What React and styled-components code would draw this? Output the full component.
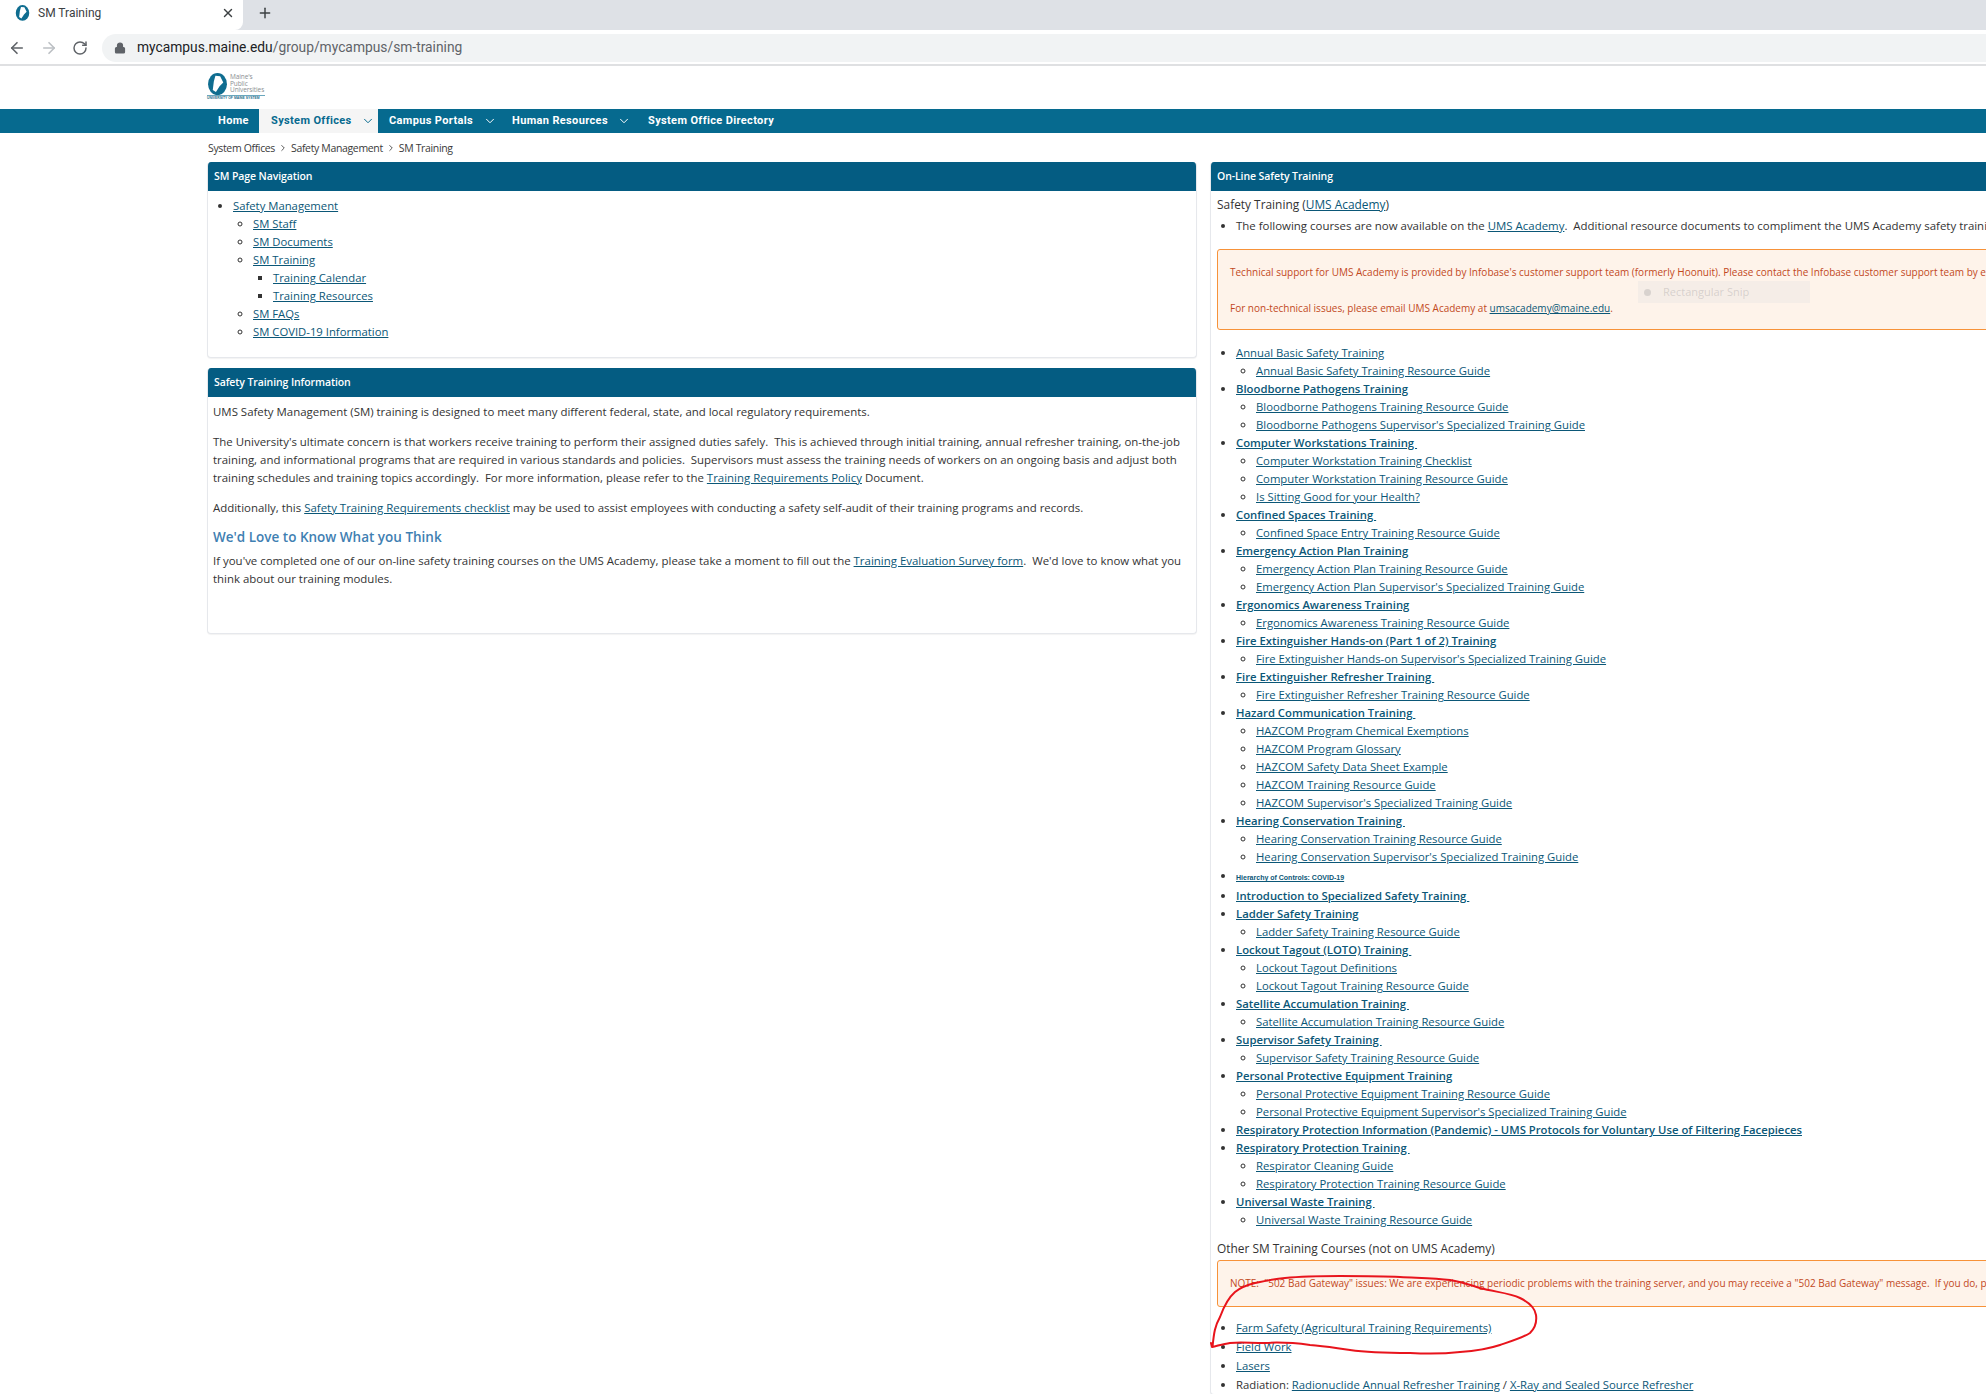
import React from "react";
import styled, { createGlobalStyle } from "styled-components";
import { ArrowLeft, ArrowRight, RotateCw, Lock, X, Plus, ChevronDown, ChevronRight } from "lucide-react";

const Global = createGlobalStyle`
  html, body { margin: 0; padding: 0; background: #fff; }
  body { font-family: "Open Sans", "Liberation Sans", sans-serif; font-size: 11.3px; line-height: 18px; color: #333; }
`;
const Page = styled.div`position: relative; width: 1986px; height: 1394px; overflow: hidden; background: #fff;`;
const TabStrip = styled.div`display: flex; align-items: stretch; height: 30px; background: #dee1e6;`;
const Tab = styled.div`
  width: 243px; box-sizing: border-box; display: flex; align-items: center; padding: 0 8px 4px 15px; background: #fff;
  border-radius: 0 0 8px 0; font: 12px/1 Roboto, sans-serif; color: #3c4043;
`;
const TabTitle = styled.span`margin-left: 8px; flex: 1;`;
const NewTab = styled.div`display: flex; align-items: center; margin-left: 14px; padding-bottom: 4px; color: #3c4043;`;
const Toolbar = styled.div`
  height: 36px; box-sizing: border-box; display: flex; align-items: center; padding: 2px 0 0 8px; gap: 14px;
  background: #fff; border-bottom: 2px solid #dfe0e2; color: #5f6368;
`;
const NavIcons = styled.div`display: flex; align-items: center; gap: 14px;`;
const AddressBar = styled.div`
  flex: 1; height: 28px; display: flex; align-items: center; gap: 11px; padding-left: 12px; background: #f1f3f4;
  border-radius: 14px 0 0 14px; font: 13.8px/1 Roboto, sans-serif; color: #5f6368;
`;
const Host = styled.span`color: #202124;`;
const LogoRow = styled.div`height: 43px; box-sizing: border-box; padding: 7px 0 0 207px;`;
const MainNav = styled.nav`
  height: 24px; display: flex; align-items: stretch; padding-left: 207px; background: #066a8f;
  font: 700 11px/24px Roboto, sans-serif; color: #fff;
`;
const NavItem = styled.div`
  display: flex; align-items: center; box-sizing: border-box; width: ${p => p.$w}px; padding-left: ${p => p.$pad}px;
  gap: ${p => p.$gap || 0}px;
  background: ${p => (p.$active ? "#f5f5f5" : "transparent")}; color: ${p => (p.$active ? "#066a8f" : "#fff")};
  letter-spacing: .36px; white-space: nowrap;
`;
const Crumbs = styled.div`
  height: 29px; display: flex; align-items: center; gap: 3px; padding-left: 208px; font-size: 10.5px; letter-spacing: -.35px; color: #3a3a3a;
`;
const Columns = styled.div`display: flex; align-items: flex-start; gap: 13px; padding-left: 207px;`;
const Col = styled.div`flex: 0 0 990px; display: flex; flex-direction: column; gap: 10px;`;
const Panel = styled.section`
  box-sizing: border-box; min-height: ${p => p.$h || 0}px; border: 1px solid #e6e8ec; border-top: 0; border-radius: 4px;
  box-shadow: 0 1px 1px rgba(0,0,0,.05); background: #fff; overflow: hidden;
`;
const PanelHead = styled.h2`
  margin: 0 -1px; height: 29px; padding-left: 7px; background: #045c82; color: #fff;
  font-size: 10.5px; font-weight: 600; line-height: 29px; letter-spacing: -.1px;
`;
const PanelBody = styled.div`padding: ${p => p.$top || 0}px 5px 0 5px;`;
const P = styled.p`margin: 0 0 ${p => p.$mb ?? 12}px; font-size: 11.45px;`;
const H3 = styled.h3`margin: 0 0 6px; font-size: 13.5px; line-height: 18px; font-weight: 600; color: #3f80b2;`;
const A = styled.a`color: #0b5777; text-decoration: underline; font-weight: ${p => (p.$strong ? 600 : 400)};`;
const UL = styled.ul`
  margin: 0; padding-left: 20px; list-style-type: ${p => p.$kind || "disc"};
`;
const LI = styled.li`line-height: ${p => p.$lh || 18}px; white-space: nowrap;`;
const LeadItem = styled(LI)`font-size: 11.45px;`;
const Alert = styled.div`
  width: 1400px; box-sizing: border-box; height: ${p => p.$h}px; margin: ${p => p.$mt || 0}px 0 ${p => p.$mb || 0}px 1px;
  padding: ${p => p.$pt}px 12px 0; border: 1px solid #f79239; border-radius: 3px; background: #fef3ea; color: #c2491d;
  font-size: 10px; white-space: nowrap;
`;
const AlertLine = styled.p`margin: 18px 0 0;`;
const Heading = styled.div`margin: ${p => p.$mt || 0}px 0 0 1px; font-size: 11.9px; line-height: 18px; white-space: nowrap;`;
const LeadList = styled(UL)`margin-top: 4px;`;
const Tiny = styled.a`font: 700 7px/18px "Liberation Sans", sans-serif; color: #0b5777; text-decoration: underline;`;
const Ghost = styled.div`
  position: absolute; left: 1638px; top: 281px; width: 172px; height: 22px; display: flex; align-items: center; gap: 12px; padding-left: 6px; box-sizing: border-box;
  background: rgba(225,225,225,.3); color: rgba(140,140,140,.3); font-size: 11px;
`;
const GhostDot = styled.span`width: 7px; height: 7px; border-radius: 50%; background: rgba(150,150,150,.3);`;
const Scribble = styled.svg`position: absolute; left: 1200px; top: 1260px; pointer-events: none;`;
const LogoWrap = styled.div`display: inline-flex; flex-direction: column; width: 58px; color: #8a8f92;`;
const LogoTop = styled.div`display: flex; align-items: center; gap: 2px;`;
const LogoText = styled.div`font-size: 6.5px; line-height: 6.6px; letter-spacing: -.1px;`;
const LogoBar = styled.div`border-top: 1px solid #6aa7bd; font: 700 3.4px/5px "Liberation Sans", sans-serif; color: #1e6d8a; white-space: nowrap;`;

const Maine = ({ size }) => (
  <svg width={size} height={size * 1.06} viewBox="0 0 20 21">
    <ellipse cx="10" cy="10.5" rx="9" ry="10.5" fill="#0f6d90" />
    <path d="M8 2.5 L12.5 3 L15.5 9 L12 12.5 L8.5 18 L5.5 16 L6.5 8 Z" fill="#fff" />
  </svg>
);

const main = [
  ["Annual Basic Safety Training", false, ["Annual Basic Safety Training Resource Guide"]],
  ["Bloodborne Pathogens Training", true, ["Bloodborne Pathogens Training Resource Guide", "Bloodborne Pathogens Supervisor's Specialized Training Guide"]],
  ["Computer Workstations Training\u00a0", true, ["Computer Workstation Training Checklist", "Computer Workstation Training Resource Guide", "Is Sitting Good for your Health?"]],
  ["Confined Spaces Training\u00a0", true, ["Confined Space Entry Training Resource Guide"]],
  ["Emergency Action Plan Training", true, ["Emergency Action Plan Training Resource Guide", "Emergency Action Plan Supervisor's Specialized Training Guide"]],
  ["Ergonomics Awareness Training", true, ["Ergonomics Awareness Training Resource Guide"]],
  ["Fire Extinguisher Hands-on (Part 1 of 2) Training", true, ["Fire Extinguisher Hands-on Supervisor's Specialized Training Guide"]],
  ["Fire Extinguisher Refresher Training\u00a0", true, ["Fire Extinguisher Refresher Training Resource Guide"]],
  ["Hazard Communication Training\u00a0", true, ["HAZCOM Program Chemical Exemptions", "HAZCOM Program Glossary", "HAZCOM Safety Data Sheet Example", "HAZCOM Training Resource Guide", "HAZCOM Supervisor's Specialized Training Guide"]],
  ["Hearing Conservation Training\u00a0", true, ["Hearing Conservation Training Resource Guide", "Hearing Conservation Supervisor's Specialized Training Guide"]],
  ["__tiny"],
  ["Introduction to Specialized Safety Training\u00a0", true, []],
  ["Ladder Safety Training", true, ["Ladder Safety Training Resource Guide"]],
  ["Lockout Tagout (LOTO) Training\u00a0", true, ["Lockout Tagout Definitions", "Lockout Tagout Training Resource Guide"]],
  ["Satellite Accumulation Training\u00a0", true, ["Satellite Accumulation Training Resource Guide"]],
  ["Supervisor Safety Training\u00a0", true, ["Supervisor Safety Training Resource Guide"]],
  ["Personal Protective Equipment Training", true, ["Personal Protective Equipment Training Resource Guide", "Personal Protective Equipment Supervisor's Specialized Training Guide"]],
  ["Respiratory Protection Information (Pandemic) - UMS Protocols for Voluntary Use of Filtering Facepieces", true, []],
  ["Respiratory Protection Training\u00a0", true, ["Respirator Cleaning Guide", "Respiratory Protection Training Resource Guide"]],
  ["Universal Waste Training\u00a0", true, ["Universal Waste Training Resource Guide"]],
];

export default function App() {
  return (
    <Page>
      <Global />
      <TabStrip>
        <Tab><Maine size={15} /><TabTitle>SM Training</TabTitle><X size={14} strokeWidth={2.4} color="#3c4043" /></Tab>
        <NewTab><Plus size={16} strokeWidth={2.2} /></NewTab>
      </TabStrip>
      <Toolbar>
        <NavIcons>
          <ArrowLeft size={18} strokeWidth={2.2} />
          <ArrowRight size={18} strokeWidth={2.2} color="#bcc0c4" />
          <RotateCw size={16} strokeWidth={2.2} />
        </NavIcons>
        <AddressBar>
          <Lock size={12} strokeWidth={2.4} fill="#5f6368" />
          <span><Host>mycampus.maine.edu</Host>/group/mycampus/sm-training</span>
        </AddressBar>
      </Toolbar>
      <LogoRow>
        <LogoWrap>
          <LogoTop>
            <Maine size={21} />
            <LogoText>Maine's<br />Public<br />Universities</LogoText>
          </LogoTop>
          <LogoBar>UNIVERSITY OF MAINE SYSTEM</LogoBar>
        </LogoWrap>
      </LogoRow>
      <MainNav>
        <NavItem $w={52} $pad={11}>Home</NavItem>
        <NavItem $w={119} $pad={12} $gap={9} $active>System Offices <ChevronDown size={14} strokeWidth={1.7} /></NavItem>
        <NavItem $w={122} $pad={11} $gap={10}>Campus Portals <ChevronDown size={14} strokeWidth={1.7} /></NavItem>
        <NavItem $w={136} $pad={12} $gap={9}>Human Resources <ChevronDown size={14} strokeWidth={1.7} /></NavItem>
        <NavItem $w={160} $pad={12}>System Office Directory</NavItem>
      </MainNav>
      <Crumbs>System Offices <ChevronRight size={10} /> Safety Management <ChevronRight size={10} /> SM Training</Crumbs>
      <Columns>
        <Col>
          <Panel $h={196}>
            <PanelHead>SM Page Navigation</PanelHead>
            <PanelBody $top={6}>
              <UL>
                <LI><A href="#">Safety Management</A>
                  <UL $kind="circle">
                    <LI><A href="#">SM Staff</A></LI>
                    <LI><A href="#">SM Documents</A></LI>
                    <LI><A href="#">SM Training</A>
                      <UL $kind="square">
                        <LI><A href="#">Training Calendar</A></LI>
                        <LI><A href="#">Training Resources</A></LI>
                      </UL>
                    </LI>
                    <LI><A href="#">SM FAQs</A></LI>
                    <LI><A href="#">SM COVID-19 Information</A></LI>
                  </UL>
                </LI>
              </UL>
            </PanelBody>
          </Panel>
          <Panel $h={266}>
            <PanelHead>Safety Training Information</PanelHead>
            <PanelBody $top={6}>
              <P>UMS Safety Management (SM) training is designed to meet many different federal, state, and local regulatory requirements.</P>
              <P>The University's ultimate concern is that workers receive training to perform their assigned duties safely.&nbsp; This is achieved through initial training, annual refresher training, on-the-job training, and informational programs that are required in various standards and policies.&nbsp; Supervisors must assess the training needs of workers on an ongoing basis and adjust both training schedules and training topics accordingly.&nbsp; For more information, please refer to the <A href="#">Training Requirements Policy</A> Document.</P>
              <P $mb={11}>Additionally, this <A href="#">Safety Training Requirements checklist</A> may be used to assist employees with conducting a safety self-audit of their training programs and records.</P>
              <H3>We'd Love to Know What you Think</H3>
              <P>If you've completed one of our on-line safety training courses on the UMS Academy, please take a moment to fill out the <A href="#">Training Evaluation Survey form</A>.&nbsp; We'd love to know what you think about our training modules.</P>
            </PanelBody>
          </Panel>
        </Col>
        <Col>
          <Panel>
            <PanelHead>On-Line Safety Training</PanelHead>
            <PanelBody $top={4}>
              <Heading>Safety Training (<A href="#">UMS Academy</A>)</Heading>
              <LeadList>
                <LeadItem>The following courses are now available on the <A href="#">UMS Academy</A>.&nbsp; Additional resource documents to compliment the UMS Academy safety training courses are also provided below.</LeadItem>
              </LeadList>
              <Alert $h={81} $mt={14} $mb={14} $pt={13}>
                Technical support for UMS Academy is provided by Infobase's customer support team (formerly Hoonuit). Please contact the Infobase customer support team by email for assistance.
                <AlertLine>For non-technical issues, please email UMS Academy at <A href="#">umsacademy@maine.edu</A>.</AlertLine>
              </Alert>
              <UL>
                {main.map(([t, strong, subs]) =>
                  t === "__tiny" ? (
                    <LI key={t} $lh={20}><Tiny href="#">Hierarchy of Controls: COVID-19</Tiny></LI>
                  ) : (
                    <LI key={t}>
                      <A href="#" $strong={strong}>{t}</A>
                      {subs.length > 0 && (
                        <UL $kind="circle">
                          {subs.map(s => <LI key={s}><A href="#">{s}</A></LI>)}
                        </UL>
                      )}
                    </LI>
                  )
                )}
              </UL>
              <Heading $mt={10}>Other SM Training Courses (not on UMS Academy)</Heading>
              <Alert $h={47} $mt={3} $mb={11} $pt={13}>
                NOTE:&nbsp; "502 Bad Gateway" issues: We are experiencing periodic problems with the training server, and you may receive a "502 Bad Gateway" message.&nbsp; If you do, please try again later.
              </Alert>
              <UL>
                <LI $lh={19}><A href="#">Farm Safety (Agricultural Training Requirements)</A></LI>
                <LI $lh={19}><A href="#">Field Work</A></LI>
                <LI $lh={19}><A href="#">Lasers</A></LI>
                <LI $lh={19}>Radiation: <A href="#">Radionuclide Annual Refresher Training</A> / <A href="#">X-Ray and Sealed Source Refresher</A></LI>
              </UL>
            </PanelBody>
          </Panel>
        </Col>
      </Columns>
      <Ghost><GhostDot />Rectangular Snip</Ghost>
      <Scribble width="345" height="110" viewBox="0 0 345 110" fill="none">
        <path d="M12.5 87 C14 72 15 66 20 57 C24 46 28 38 35 32 C41 27 47 25 55 23 C65 21 74 19 85 18 C105 16 120 16 140 16 C165 16 182 16 200 17 C220 18 235 18 250 20 C262 22 270 25 280 28 C295 32 310 33 320 38 C330 43 335 48 336 55 C337 62 335 68 330 73 C322 78 312 81 300 85 C288 89 275 91 260 92 C243 94 227 94 210 93 C190 93 170 93 150 90 C135 88 125 86 110 85 C95 83 80 82 65 83 C50 83 40 82 30 83 C23 84 17 86 12 87 L11 83" stroke="#e8141c" strokeWidth="2" strokeLinecap="round" strokeLinejoin="round" />
      </Scribble>
    </Page>
  );
}
